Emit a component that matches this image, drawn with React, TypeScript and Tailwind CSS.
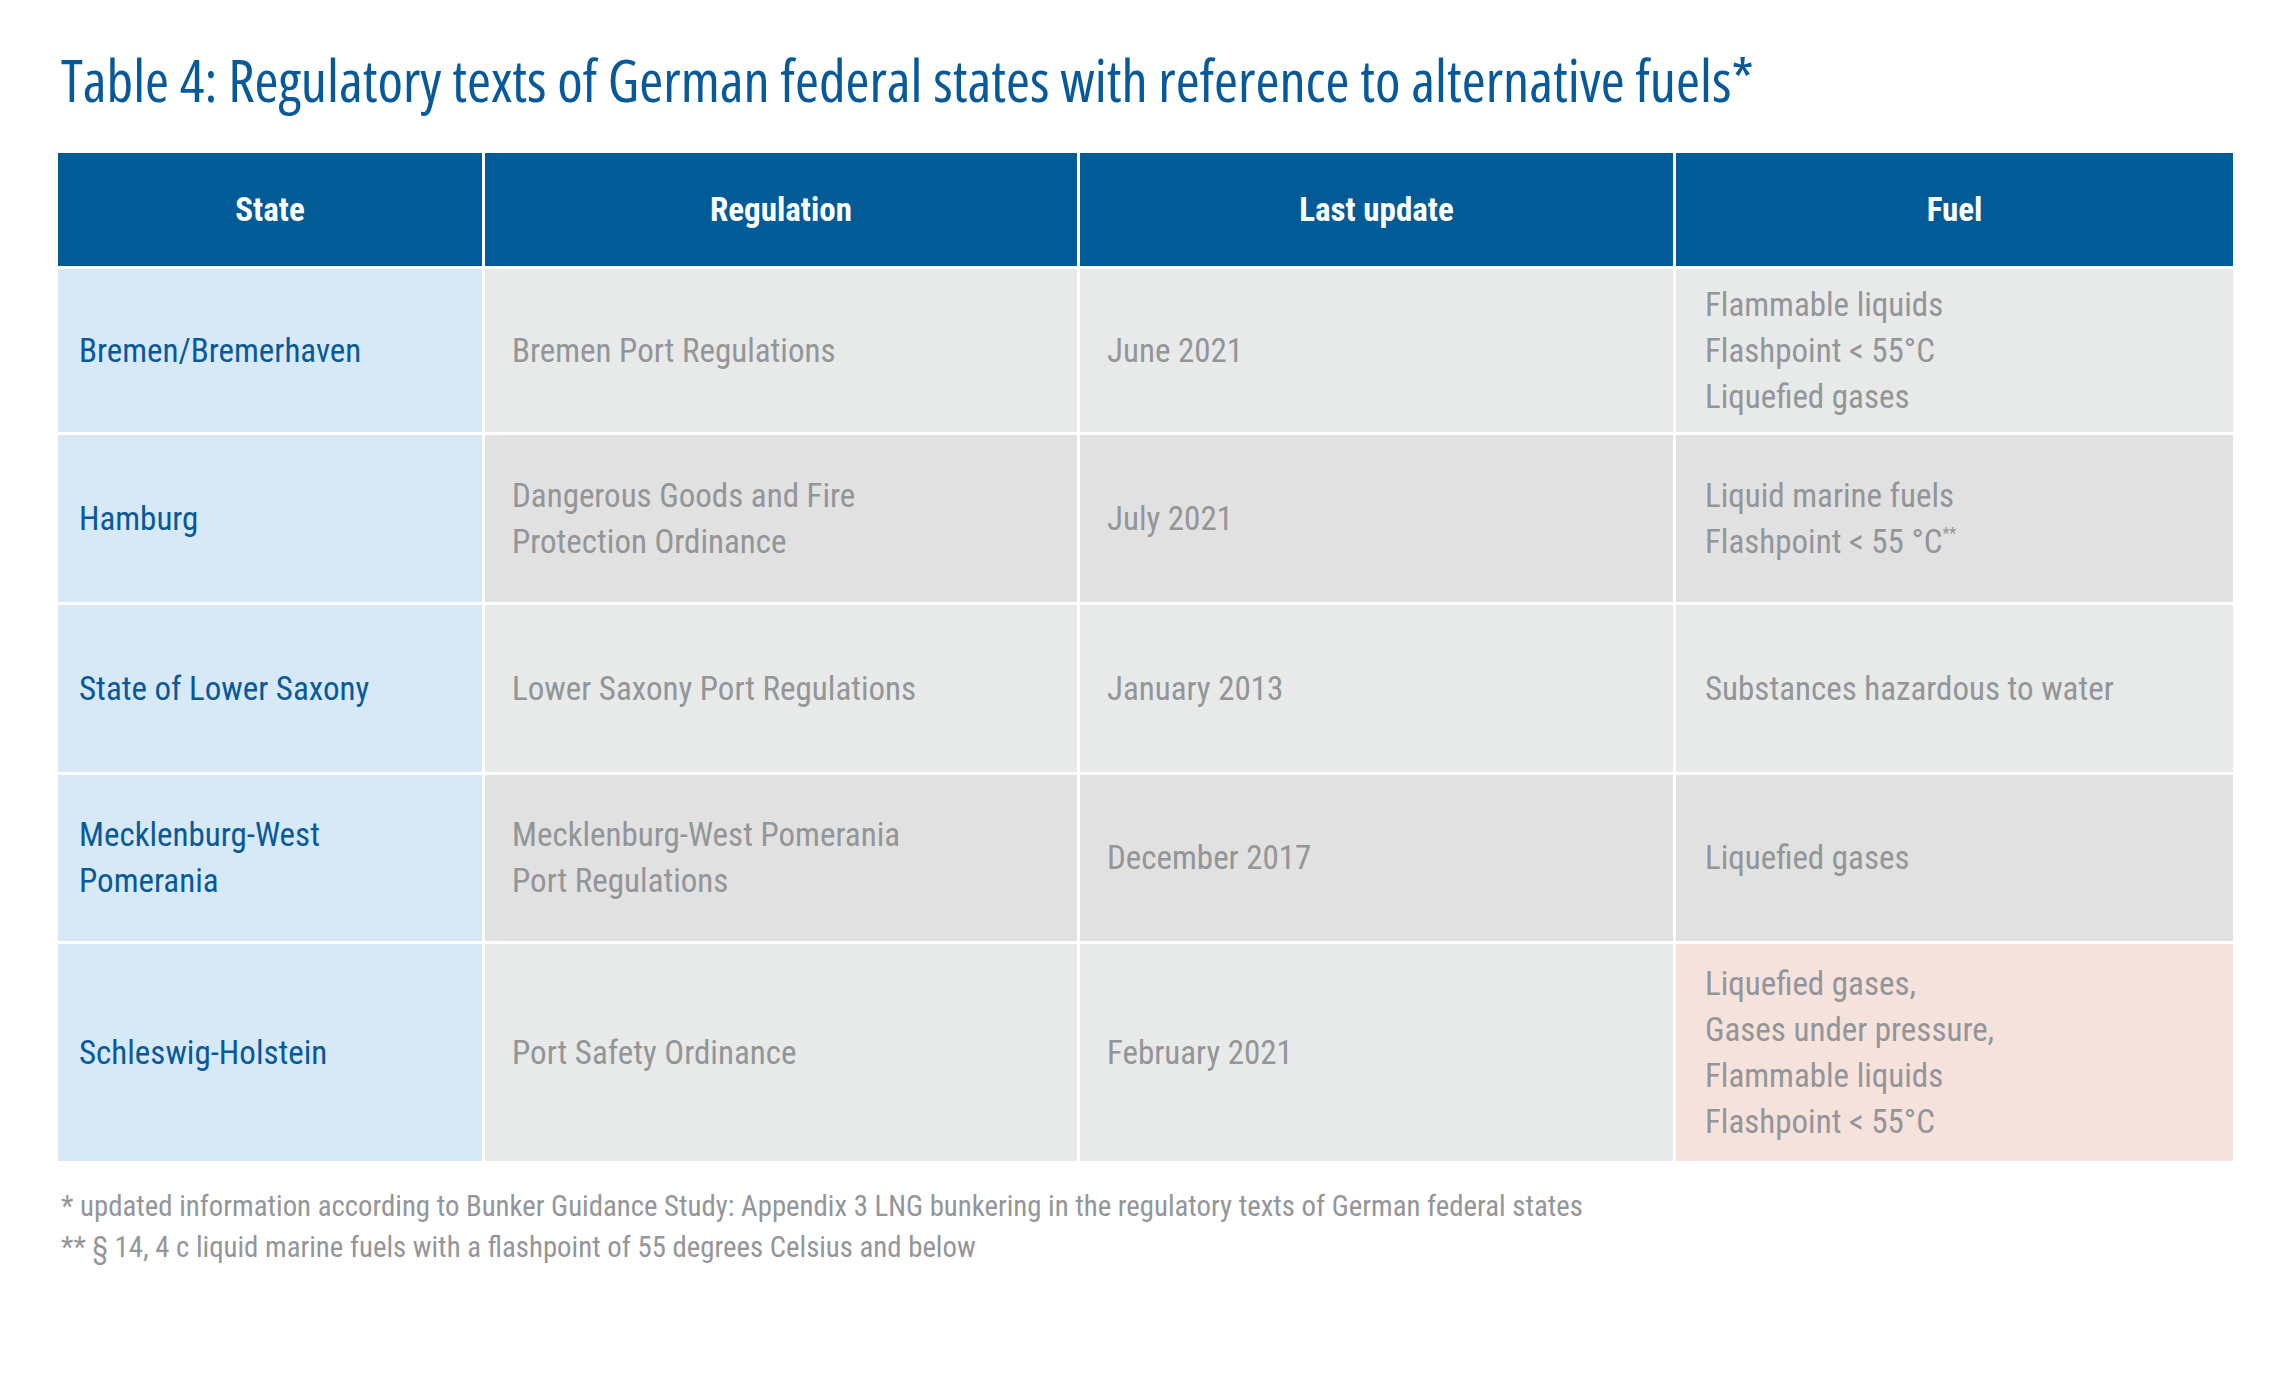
const font = "font-['Roboto','Liberation_Sans',sans-serif] font-stretch-condensed";

type Row = {
  state: string[];
  regulation: string[];
  update: string;
  fuel: React.ReactNode[];
  shade: string;
  fuelShade?: string;
};

const rows: Row[] = [
  {
    state: ['Bremen/Bremerhaven'],
    regulation: ['Bremen Port Regulations'],
    update: 'June 2021',
    fuel: ['Flammable liquids', 'Flashpoint < 55°C', 'Liquefied gases'],
    shade: 'bg-[#e8e9e9]',
  },
  {
    state: ['Hamburg'],
    regulation: ['Dangerous Goods and Fire', 'Protection Ordinance'],
    update: 'July 2021',
    fuel: [
      'Liquid marine fuels',
      <>
        Flashpoint &lt; 55 °C<sup className="text-[16px] -top-[14px]">**</sup>
      </>,
    ],
    shade: 'bg-[#e1e1e1]',
  },
  {
    state: ['State of Lower Saxony'],
    regulation: ['Lower Saxony Port Regulations'],
    update: 'January 2013',
    fuel: ['Substances hazardous to water'],
    shade: 'bg-[#e8e9e9]',
  },
  {
    state: ['Mecklenburg-West', 'Pomerania'],
    regulation: ['Mecklenburg-West Pomerania', 'Port Regulations'],
    update: 'December 2017',
    fuel: ['Liquefied gases'],
    shade: 'bg-[#e1e1e1]',
  },
  {
    state: ['Schleswig-Holstein'],
    regulation: ['Port Safety Ordinance'],
    update: 'February 2021',
    fuel: ['Liquefied gases,', 'Gases under pressure,', 'Flammable liquids', 'Flashpoint < 55°C'],
    shade: 'bg-[#e8e9e9]',
    fuelShade: 'bg-[#f5e2dd]',
  },
];

function Lines({ lines }: { lines: React.ReactNode[] }) {
  return (
    <div className="flex flex-col">
      {lines.map((l, i) => (
        <span key={i}>{l}</span>
      ))}
    </div>
  );
}

export default function App() {
  return (
    <div className={`${font} w-[2291px] h-[1394px] bg-white`}>
      <div className="pt-[46px] pl-[61px]">
        <h1 className="font-['Open_Sans','Roboto',sans-serif] font-stretch-condensed font-normal text-[#07599a] text-[58px] leading-[68px]">
          Table 4: Regulatory texts of German federal states with reference to alternative fuels*
        </h1>
      </div>

      <div className="ml-[58px] mt-[39px] w-[2175px] grid grid-cols-[424px_592px_593px_557px] grid-rows-[113px_163px_167px_167px_166px_217px] gap-x-[3px] gap-y-[3px] text-[33px] leading-[46px]">
        {['State', 'Regulation', 'Last update', 'Fuel'].map((h) => (
          <div key={h} className="bg-[#005b97] text-white font-bold flex items-center justify-center">
            {h}
          </div>
        ))}

        {rows.map((r) => (
          <div key={r.update} className="contents">
            <div className="bg-[#d7e9f7] text-[#07599a] flex items-center pl-[21px]">
              <Lines lines={r.state} />
            </div>
            <div className={`${r.shade} text-[#939598] flex items-center pl-[27px]`}>
              <Lines lines={r.regulation} />
            </div>
            <div className={`${r.shade} text-[#939598] flex items-center pl-[27px]`}>
              <Lines lines={[r.update]} />
            </div>
            <div className={`${r.fuelShade ?? r.shade} text-[#939598] flex items-center pl-[29px]`}>
              <Lines lines={r.fuel} />
            </div>
          </div>
        ))}
      </div>

      <div className="ml-[61px] mt-[25px] text-[#939598] text-[28.8px] leading-[41px]">
        <p>* updated information according to Bunker Guidance Study: Appendix 3 LNG bunkering in the regulatory texts of German federal states</p>
        <p>** § 14, 4 c liquid marine fuels with a flashpoint of 55 degrees Celsius and below</p>
      </div>
    </div>
  );
}
